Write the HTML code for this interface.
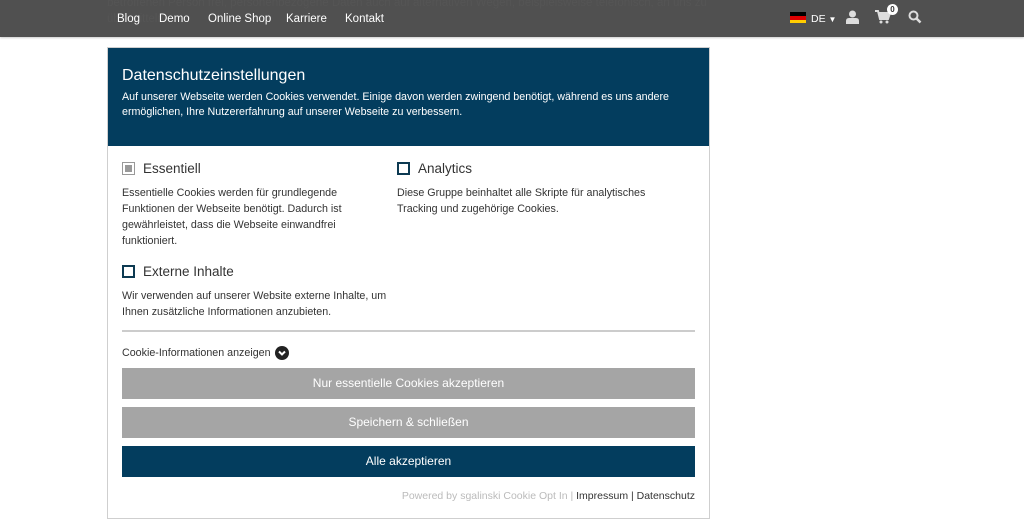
<!DOCTYPE html>
<html><head><meta charset="utf-8"><style>
*{margin:0;padding:0;box-sizing:border-box}
body{width:1024px;height:527px;overflow:hidden;background:#fff;font-family:"Liberation Sans",sans-serif;position:relative}
.top{position:absolute;left:0;top:0;width:1024px;height:37px;background:#505050;box-shadow:0 1px 2px rgba(0,0,0,.2)}
.bgt{position:absolute;left:107px;top:-5px;color:#555;font-size:11.5px;line-height:16px;white-space:nowrap}
.nav{position:absolute;top:13px;color:#fff;font-size:11.5px}
.modal{position:absolute;left:107px;top:47px;width:603px;height:472px;border:1px solid #cfcfcf;background:#fff}
.hd{background:#033d5e;height:98px;color:#fff;padding:19px 14px 0 14px}
.hd h1{font-weight:normal;font-size:16px;margin-bottom:5px}
.hd p{font-size:10.7px;line-height:15px}
.cb{position:absolute;width:13px;height:13px;border:2px solid #0d3a52}
.lab{position:absolute;font-size:13.5px;color:#333}
.txt{position:absolute;font-size:10.7px;line-height:16px;color:#333}
.btn{position:absolute;left:14px;width:573px;height:31px;color:#fff;font-size:12px;text-align:center;line-height:31px}
</style></head><body>
<div class="top">
<div class="bgt">betroffenen Person frei, personenbezogene Daten auch auf alternativen Wegen, beispielsweise telefonisch, an uns zu<br>übermitteln.</div>
<span class="nav" style="left:117px">Blog</span>
<span class="nav" style="left:159px">Demo</span>
<span class="nav" style="left:208px">Online Shop</span>
<span class="nav" style="left:286px">Karriere</span>
<span class="nav" style="left:345px">Kontakt</span>
<div style="position:absolute;left:790px;top:12px;width:16px;height:11px"><div style="height:4px;background:#000"></div><div style="height:4px;background:#d00"></div><div style="height:3px;background:#fc0"></div></div>
<span class="nav" style="left:811px;font-size:10.5px">DE <span style="font-size:8px">▼</span></span>
<svg style="position:absolute;left:846px;top:10px" width="13" height="14" viewBox="0 0 13 14"><circle cx="6.5" cy="4" r="3.5" fill="#ddd"/><path d="M0 14v-3q0-3 3-3h7q3 0 3 3v3z" fill="#ddd"/></svg>
<svg style="position:absolute;left:875px;top:10px" width="16" height="14" viewBox="0 0 16 14"><path d="M0 1h3l2 8h8l2-6H4" fill="none" stroke="#ddd" stroke-width="2"/><path d="M4 3h11l-2 6H5z" fill="#ddd"/><circle cx="6" cy="12" r="1.5" fill="#ddd"/><circle cx="12" cy="12" r="1.5" fill="#ddd"/></svg>
<div style="position:absolute;left:887px;top:4px;width:11px;height:11px;border-radius:50%;background:#fff;color:#333;font-size:8px;text-align:center;line-height:11px;font-weight:bold">0</div>
<svg style="position:absolute;left:908px;top:10px" width="14" height="14" viewBox="0 0 14 14"><circle cx="5.5" cy="5.5" r="4" fill="none" stroke="#ddd" stroke-width="2"/><path d="M8.5 8.5l4 4" stroke="#ddd" stroke-width="2.5"/></svg>
</div>
<div class="modal">
<div class="hd"><h1>Datenschutzeinstellungen</h1><p>Auf unserer Webseite werden Cookies verwendet. Einige davon werden zwingend benötigt, während es uns andere ermöglichen, Ihre Nutzererfahrung auf unserer Webseite zu verbessern.</p></div>
<div class="cb" style="left:14px;top:114px;border-color:#999;border-width:1px;background:#fff"><div style="margin:2px;width:7px;height:7px;background:#999"></div></div>
<div class="lab" style="left:35px;top:113px">Essentiell</div>
<div class="txt" style="left:14px;top:137px;width:270px">Essentielle Cookies werden für grundlegende Funktionen der Webseite benötigt. Dadurch ist gewährleistet, dass die Webseite einwandfrei funktioniert.</div>
<div class="cb" style="left:289px;top:114px"></div>
<div class="lab" style="left:310px;top:113px">Analytics</div>
<div class="txt" style="left:289px;top:137px;width:280px">Diese Gruppe beinhaltet alle Skripte für analytisches Tracking und zugehörige Cookies.</div>
<div class="cb" style="left:14px;top:217px"></div>
<div class="lab" style="left:35px;top:216px">Externe Inhalte</div>
<div class="txt" style="left:14px;top:240px;width:280px">Wir verwenden auf unserer Website externe Inhalte, um Ihnen zusätzliche Informationen anzubieten.</div>
<div style="position:absolute;left:14px;top:282px;width:573px;height:2px;background:#ccc"></div>
<div class="txt" style="left:14px;top:297px">Cookie-Informationen anzeigen</div>
<svg style="position:absolute;left:167px;top:298px" width="14" height="14" viewBox="0 0 14 14"><circle cx="7" cy="7" r="7" fill="#222"/><path d="M4 5.5l3 3 3-3" fill="none" stroke="#fff" stroke-width="2"/></svg>
<div class="btn" style="top:320px;background:#a5a5a5">Nur essentielle Cookies akzeptieren</div>
<div class="btn" style="top:359px;background:#a5a5a5">Speichern &amp; schließen</div>
<div class="btn" style="top:398px;background:#033d5e">Alle akzeptieren</div>
<div style="position:absolute;right:14px;top:442px;font-size:10.5px;color:#bbb">Powered by sgalinski Cookie Opt In | <span style="color:#333">Impressum | Datenschutz</span></div>
</div>
</body></html>
